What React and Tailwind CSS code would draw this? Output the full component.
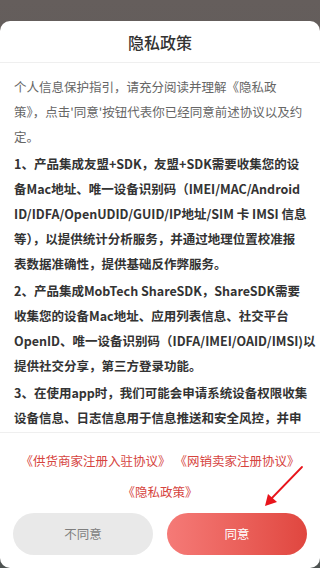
import React from 'react';

const intro = [
    '个人信息保护指引，请充分阅读并理解《隐私政',
    "策》，点击'同意'按钮代表你已经同意前述协议以及约",
    '定。',
];

const items = [
    [
        '1、产品集成友盟+SDK，友盟+SDK需要收集您的设',
        '备Mac地址、唯一设备识别码（IMEI/MAC/Android',
        'ID/IDFA/OpenUDID/GUID/IP地址/SIM 卡 IMSI 信息',
        '等），以提供统计分析服务，并通过地理位置校准报',
        '表数据准确性，提供基础反作弊服务。',
    ],
    [
        '2、产品集成MobTech ShareSDK，ShareSDK需要',
        '收集您的设备Mac地址、应用列表信息、社交平台',
        'OpenID、唯一设备识别码（IDFA/IMEI/OAID/IMSI)以',
        '提供社交分享，第三方登录功能。',
    ],
    [
        '3、在使用app时，我们可能会申请系统设备权限收集',
        '设备信息、日志信息用于信息推送和安全风控，并申',
    ],
];

const font = { fontFamily: '"Noto Sans CJK SC", "Noto Sans", sans-serif' };

export default function App() {
    return (
        <div className="relative h-[568px] w-[320px] overflow-hidden bg-gradient-to-b from-[#655e5c] to-[#4e5352] pt-[21px]" style={font}>
            <div className="flex h-[547px] flex-col overflow-hidden rounded-[10px] bg-white">
                {/* Title */}
                <div className="flex h-[42px] shrink-0 items-center justify-center border-b border-[#efefef] text-[16px] font-medium text-[#333]">
                    隐私政策
                </div>

                {/* Scrollable body */}
                <div className="flex-1 overflow-hidden px-[14px] pt-[11px]">
                    <div className="mb-[2px] text-[12.5px] leading-[25px] text-[#666]">
                        {intro.map((l, i) => (
                            <div key={i} className="whitespace-nowrap">{l}</div>
                        ))}
                    </div>
                    {items.map((p, i) => (
                        <div key={i} className="mb-[2px] text-[12.5px] font-bold leading-[25px] text-[#333]">
                            {p.map((l, j) => (
                                <div key={j} className="whitespace-nowrap">{l}</div>
                            ))}
                        </div>
                    ))}
                </div>

                {/* Footer */}
                <div className="shrink-0 border-t border-[#efefef] px-[13px] pb-[13px] pt-[12px]">
                    <div className="text-center text-[12.5px] leading-[31px] text-[#d6443e]">
                        <div className="flex justify-center gap-[4px]">
                            <span>《供货商家注册入驻协议》</span>
                            <span>《网销卖家注册协议》</span>
                        </div>
                        <div>《隐私政策》</div>
                    </div>
                    <div className="mt-[6px] flex gap-[14px]">
                        <button className="h-[42px] flex-1 rounded-full bg-[#e9e9e9] text-[12.5px] text-[#7e7e7e]">
                            不同意
                        </button>
                        <button className="h-[42px] flex-1 rounded-full bg-gradient-to-r from-[#f57a77] to-[#e0463f] text-[12.5px] text-white">
                            同意
                        </button>
                    </div>
                </div>
            </div>

            {/* Red annotation arrow */}
            <svg className="absolute left-0 top-0" width="320" height="568" viewBox="0 0 320 568">
                <line x1="302" y1="467" x2="271" y2="499" stroke="#e8141b" strokeWidth="1.8" strokeLinecap="round" />
                <polygon points="265,506 268,494 277,502" fill="#e8141b" />
            </svg>
        </div>
    );
}
